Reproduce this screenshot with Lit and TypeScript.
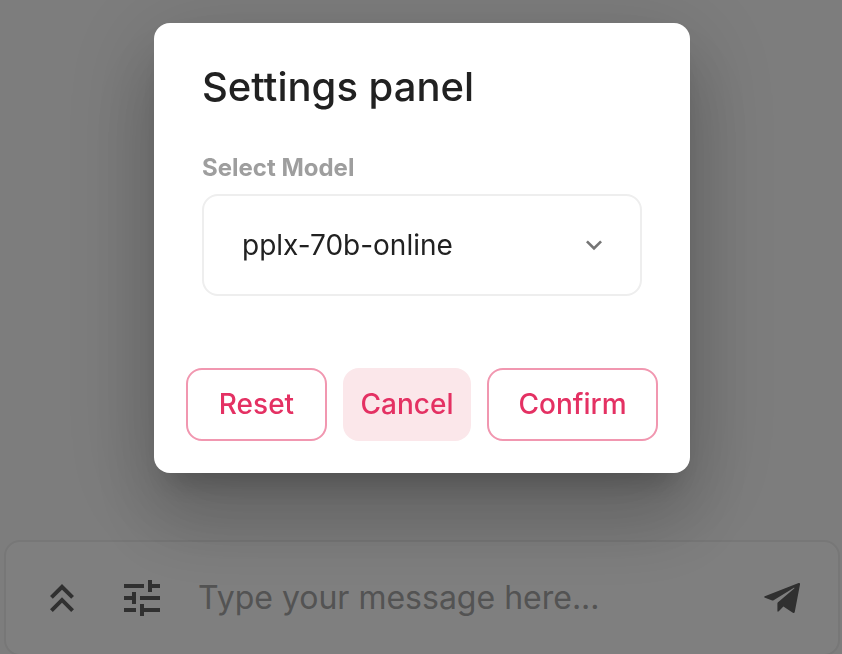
import { LitElement, html, css, svg } from "lit";
import { customElement, state } from "lit/decorators.js";

const icon = (d: string, cls: string) => svg`
  <svg class=${cls} viewBox="0 0 24 24" aria-hidden="true"><path d=${d} /></svg>
`;

const ICONS = {
  up: "M6 17.59 7.41 19 12 14.42 16.59 19 18 17.59l-6-6z M6 11l1.41 1.41L12 7.83l4.59 4.58L18 11l-6-6z",
  tune: "M3 17v2h6v-2H3zM3 5v2h10V5H3zm10 16v-2h8v-2h-8v-2h-2v6h2zM7 9v2H3v2h4v2h2V9H7zm14 4v-2H11v2h10zm-6-4h2V7h4V5h-4V3h-2v6z",
  send: "M3.4 11.1 20.3 4.5c.5-.2.8.1.7.7l-2.6 13.7c-.1.6-.7.8-1.2.4l-4.5-3-2.3 2.3c-.4.4-.7.3-.7-.2v-3.6c0-.3.1-.5.3-.7L18.1 7.2c.3-.3 0-.4-.3-.2L7.8 13.1c-.2.2-.5.2-.7.1l-3.6-1.3c-.5-.2-.5-.6-.1-.8z",
  more: "M16.59 8.59 12 13.17 7.41 8.59 6 10l6 6 6-6z",
};

@customElement("settings-panel")
class SettingsPanel extends LitElement {
  @state() private model = "pplx-70b-online";

  static styles = css`
    :host {
      display: block;
      width: 100%;
      max-width: 536px;
    }
    .panel {
      position: static;
      display: block;
      box-sizing: border-box;
      width: 100%;
      margin: 0;
      padding: 32px;
      border: 0;
      border-radius: 16px;
      background: #fff;
      color: #212121;
      box-shadow:
        0 22px 30px -14px rgba(0, 0, 0, 0.2),
        0 48px 76px 6px rgba(0, 0, 0, 0.14),
        0 18px 92px 16px rgba(0, 0, 0, 0.12);
    }
    .title {
      margin: 0;
      padding: 0 16px;
      font-size: 40px;
      line-height: 64px;
      font-weight: 500;
    }
    .field {
      display: flex;
      flex-direction: column;
      gap: 9px;
      padding: 32px 16px 72px;
    }
    .label {
      color: #9e9e9e;
      font-size: 24px;
      line-height: 34px;
      font-weight: 700;
    }
    .box {
      display: grid;
      align-items: center;
    }
    .select {
      grid-area: 1 / 1;
      appearance: none;
      box-sizing: border-box;
      width: 100%;
      height: 102px;
      padding: 0 80px 0 38px;
      border: 2px solid #eee;
      border-radius: 16px;
      background: #fff;
      color: #212121;
      font: inherit;
      font-size: 28px;
    }
    .chevron {
      grid-area: 1 / 1;
      justify-self: end;
      width: 32px;
      height: 32px;
      margin-right: 32px;
      fill: #757575;
      pointer-events: none;
    }
    .actions {
      display: grid;
      grid-template-columns: 141fr 128fr 171fr;
      gap: 16px;
    }
    .button {
      box-sizing: border-box;
      height: 73px;
      padding: 0 0 2px;
      border: 2px solid #f197b0;
      border-radius: 16px;
      background: #fff;
      color: #e43163;
      font: inherit;
      font-size: 28px;
      font-weight: 500;
    }
    .soft {
      border-color: #fbe7ea;
      background: #fbe7ea;
    }
  `;

  render() {
    return html`
      <dialog class="panel" open aria-labelledby="title">
        <h2 class="title" id="title">Settings panel</h2>
        <div class="field">
          <label class="label" for="model">Select Model</label>
          <div class="box">
            <select
              class="select"
              id="model"
              @change=${(e: Event) => (this.model = (e.target as HTMLSelectElement).value)}
            >
              <option value=${this.model}>${this.model}</option>
            </select>
            ${icon(ICONS.more, "chevron")}
          </div>
        </div>
        <div class="actions">
          <button class="button" type="button">Reset</button>
          <button class="button soft" type="button">Cancel</button>
          <button class="button" type="button">Confirm</button>
        </div>
      </dialog>
    `;
  }
}

@customElement("message-bar")
class MessageBar extends LitElement {
  static styles = css`
    :host {
      display: block;
    }
    .bar {
      display: flex;
      align-items: center;
      box-sizing: border-box;
      height: 116px;
      padding: 0 32px;
      border: 2px solid #eee;
      border-radius: 16px;
      background: #fff;
    }
    .tool {
      display: flex;
      flex: none;
      padding: 0;
      border: 0;
      background: none;
    }
    .gap {
      margin-right: 32px;
    }
    .glyph {
      width: 48px;
      height: 48px;
      fill: #616161;
    }
    .input {
      flex: 1;
      min-width: 0;
      padding: 0 0 2px;
      border: 0;
      outline: 0;
      background: none;
      color: #212121;
      font: inherit;
      font-size: 32px;
    }
    .input::placeholder {
      color: #a6a6a6;
      opacity: 1;
    }
  `;

  render() {
    return html`
      <form class="bar">
        <button class="tool gap" type="button" aria-label="Scroll to top">${icon(ICONS.up, "glyph")}</button>
        <button class="tool gap" type="button" aria-label="Settings">${icon(ICONS.tune, "glyph")}</button>
        <input class="input" type="text" aria-label="Message" placeholder="Type your message here..." />
        <button class="tool" type="button" aria-label="Send">${icon(ICONS.send, "glyph")}</button>
      </form>
    `;
  }
}

@customElement("app-root")
class AppRoot extends LitElement {
  static styles = css`
    :host {
      display: flex;
      flex-direction: column;
      justify-content: flex-end;
      height: 100vh;
      overflow: hidden;
      background: #fafafa;
      font-family: Inter, sans-serif;
    }
    .footer {
      margin: 0 2px -2px 4px;
    }
    .backdrop {
      position: fixed;
      inset: 0;
      display: flex;
      align-items: flex-start;
      justify-content: center;
      padding: 23px 0 0 2px;
      background: rgba(0, 0, 0, 0.5);
    }
  `;

  render() {
    return html`
      <message-bar class="footer"></message-bar>
      <div class="backdrop"><settings-panel></settings-panel></div>
    `;
  }
}
